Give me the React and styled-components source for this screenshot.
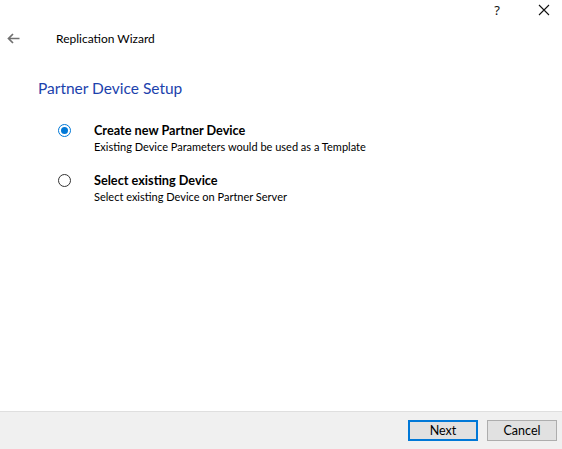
import React, { useState } from "react";
import styled, { createGlobalStyle } from "styled-components";

const GlobalStyle = createGlobalStyle`
  html, body {
    margin: 0;
    padding: 0;
    background: #ffffff;
  }
  body {
    font-family: Lato, "Noto Sans", sans-serif;
    color: #000000;
  }
`;

const options = [
  {
    id: "create",
    title: "Create new Partner Device",
    hint: "Existing Device Parameters would be used as a Template",
  },
  {
    id: "select",
    title: "Select existing Device",
    hint: "Select existing Device on Partner Server",
  },
];

const BackArrow = () => (
  <svg width="13" height="11" viewBox="0 0 13 11">
    <path d="M12.5 5.5H1.5M6 1L1.5 5.5L6 10" fill="none" stroke="#707070" strokeWidth="1.7" />
  </svg>
);

const CloseGlyph = () => (
  <svg width="12" height="12" viewBox="0 0 12 12">
    <path d="M1 1L11 11M11 1L1 11" stroke="#111" strokeWidth="1.1" />
  </svg>
);

const App = () => {
  const [choice, setChoice] = useState("create");

  return (
    <>
      <GlobalStyle />
      <Window>
        <TitleBar>
          <CaptionButton>?</CaptionButton>
          <CaptionButton>
            <CloseGlyph />
          </CaptionButton>
        </TitleBar>
        <NavRow>
          <BackButton>
            <BackArrow />
          </BackButton>
          <WizardName>Replication Wizard</WizardName>
        </NavRow>
        <Body>
          <PageTitle>Partner Device Setup</PageTitle>
          <OptionList>
            {options.map((o) => (
              <Option key={o.id} onClick={() => setChoice(o.id)}>
                <Radio $checked={choice === o.id} />
                <OptionText>
                  <OptionTitle>{o.title}</OptionTitle>
                  <OptionHint>{o.hint}</OptionHint>
                </OptionText>
              </Option>
            ))}
          </OptionList>
        </Body>
        <Footer>
          <Button $primary>Next</Button>
          <Button>Cancel</Button>
        </Footer>
      </Window>
    </>
  );
};

const Window = styled.div`
  width: 562px;
  height: 449px;
  display: flex;
  flex-direction: column;
  background: #ffffff;
  overflow: hidden;
`;

const TitleBar = styled.div`
  display: flex;
  justify-content: flex-end;
  gap: 23px;
  height: 20px;
  padding-right: 6px;
`;

const CaptionButton = styled.div`
  width: 24px;
  height: 20px;
  display: flex;
  align-items: center;
  justify-content: center;
  font-family: "Noto Sans", sans-serif;
  font-size: 13px;
  color: #111;
`;

const NavRow = styled.div`
  display: flex;
  align-items: center;
  height: 36px;
`;

const BackButton = styled.div`
  width: 56px;
  display: flex;
  align-items: center;
  padding-left: 7px;
  box-sizing: border-box;
`;

const WizardName = styled.div`
  font-size: 12px;
  color: #000;
`;

const Body = styled.div`
  flex: 1;
  padding: 22px 0 0 38px;
`;

const PageTitle = styled.h1`
  margin: 0;
  font-size: 15.5px;
  font-weight: 400;
  color: #1c42ad;
  line-height: 20px;
`;

const OptionList = styled.div`
  display: flex;
  flex-direction: column;
  gap: 17px;
  margin-top: 24px;
  padding-left: 20px;
`;

const Option = styled.div`
  display: flex;
  align-items: flex-start;
  gap: 23px;
  cursor: default;
`;

const Radio = styled.span`
  width: 13px;
  height: 13px;
  margin-top: 2px;
  box-sizing: border-box;
  border-radius: 50%;
  border: 1px solid ${({ $checked }) => ($checked ? "#0078d7" : "#333333")};
  display: flex;
  align-items: center;
  justify-content: center;

  &::after {
    content: "";
    width: 7px;
    height: 7px;
    border-radius: 50%;
    background: #0078d7;
    display: ${({ $checked }) => ($checked ? "block" : "none")};
  }
`;

const OptionText = styled.div`
  display: flex;
  flex-direction: column;
`;

const OptionTitle = styled.div`
  font-size: 12.7px;
  font-weight: 700;
  line-height: 17px;
`;

const OptionHint = styled.div`
  font-size: 11px;
  line-height: 16px;
`;

const Footer = styled.div`
  height: 37px;
  border-top: 1px solid #dfdfdf;
  background: #f0f0f0;
  display: flex;
  justify-content: flex-end;
  align-items: center;
  gap: 9px;
  padding: 0 5px 0 0;
`;

const Button = styled.div`
  width: 70px;
  height: 21px;
  box-sizing: border-box;
  background: #e1e1e1;
  border: ${({ $primary }) => ($primary ? "2px solid #0078d7" : "1px solid #adadad")};
  display: flex;
  align-items: center;
  justify-content: center;
  font-size: 12.5px;
  color: #000;
`;

export default App;
